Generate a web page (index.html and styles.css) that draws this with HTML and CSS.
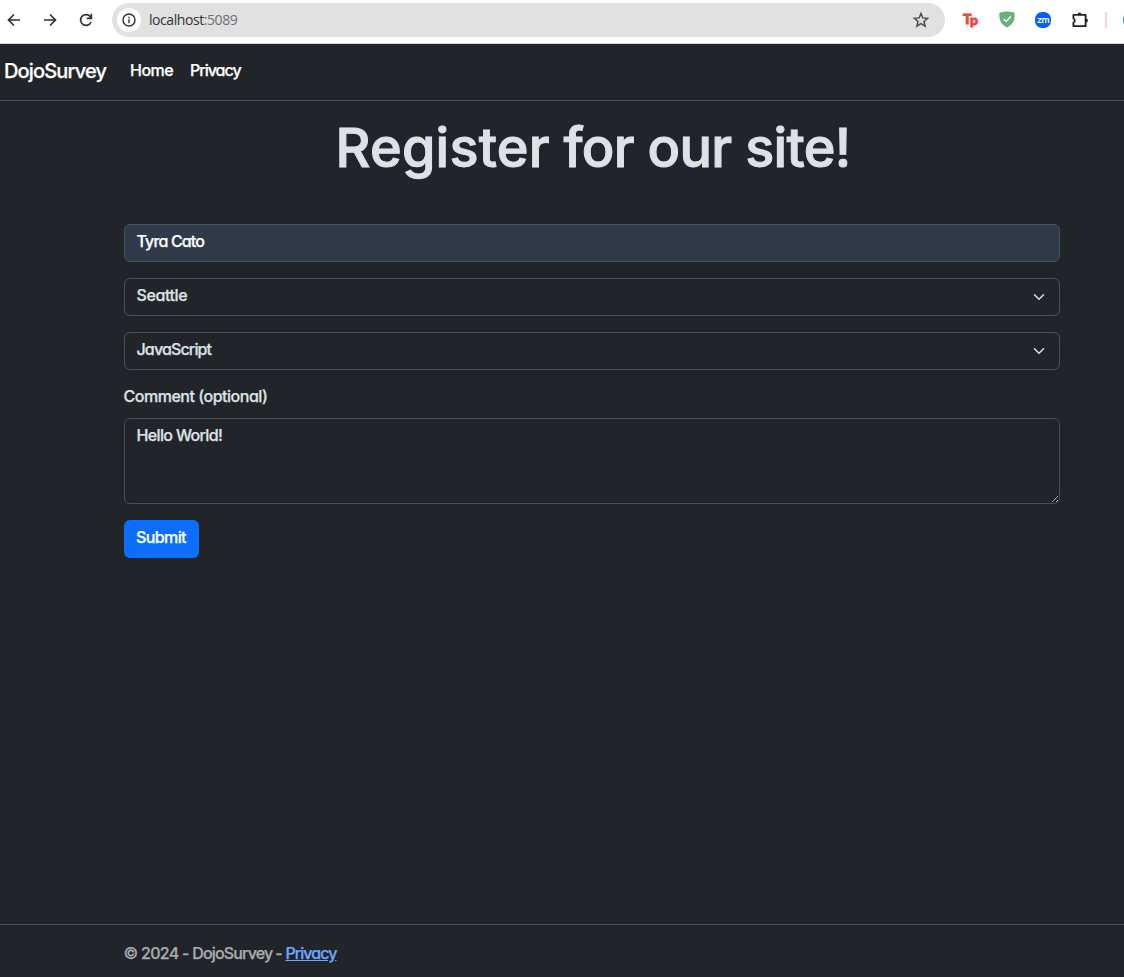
FILE: index.html
```html
<!DOCTYPE html>
<html lang="en">
<head>
<meta charset="utf-8">
<title>DojoSurvey</title>
<link rel="stylesheet" href="styles.css">
</head>
<body>
<div class="toolbar">
  <svg class="nav-icon back" width="16" height="16" viewBox="0 0 16 16"><path d="M14 8H3M8 2.5 2.5 8 8 13.5"/></svg>
  <svg class="nav-icon forward" width="16" height="16" viewBox="0 0 16 16"><path d="M2 8h11M8 2.5 13.5 8 8 13.5"/></svg>
  <svg class="nav-icon reload" width="16" height="16" viewBox="0 0 16 16"><path d="M13 10A5.400 5.400 0 1 1 12.500 5M13.300 1.800v4.600H8.800"/></svg>
  <div class="address">
    <span class="site-info"><svg width="16" height="16" viewBox="0 0 16 16"><circle cx="8" cy="8" r="6"/><path d="M8 7.2v4M8 4.7v1.5"/></svg></span>
    <span class="url">localhost<span class="port">:5089</span></span>
    <svg class="star" width="18" height="18" viewBox="0 0 18 18"><path d="m9 2.5 1.8 4.4 4.8.4-3.6 3.1 1.1 4.7L9 12.6l-4.1 2.5L6 10.400 2.400 7.300l4.800-.4z"/></svg>
  </div>
  <span class="tp"><span class="tp-t">T</span><span class="tp-p">p</span></span>
  <svg class="shield" width="16" height="17" viewBox="0 0 16 17"><path class="shield-body" d="M8 .5C5.500.500 2.500 1 .300 2 .300 8 .500 12.500 8 16.500 15.500 12.500 15.700 8 15.700 2 13.500 1 10.500.500 8 .5z"/><path class="shield-check" d="m4.700 8 2.500 2.500 4.500-5"/></svg>
  <span class="zoom-badge">zm</span>
  <svg class="puzzle" width="18" height="18" viewBox="0 0 18 18"><path d="M2.400 3.800h12.200v11.400H2.400v-3.700a2.100 2.100 0 0 0 0-4z"/><path class="knob" d="M6.700 3.500a1.900 1.900 0 0 1 3.800 0zM15 7.600a1.900 1.900 0 0 1 0 3.800z"/></svg>
  <span class="divider"></span>
  <span class="avatar"></span>
</div>
<header class="navbar">
  <a class="brand">DojoSurvey</a>
  <a class="link home">Home</a>
  <a class="link privacy">Privacy</a>
</header>
<main class="container">
  <h1><span class="lead">Register</span> for our site!</h1>
  <div class="field filled"><span class="t-name">Tyra Cato</span></div>
  <div class="field"><span class="t-city">Seattle</span><svg class="chevron" width="16" height="12" viewBox="0 0 16 16"><path d="m2 5 6 6 6-6"/></svg></div>
  <div class="field"><span class="t-lang">JavaScript</span><svg class="chevron" width="16" height="12" viewBox="0 0 16 16"><path d="m2 5 6 6 6-6"/></svg></div>
  <label for="comment" class="label">Comment (optional)</label>
  <textarea id="comment" class="comment" spellcheck="false">Hello World!</textarea>
  <button class="submit">Submit</button>
</main>
<footer class="footer"><span class="copy">© 2024 - <span class="name">DojoSurvey</span><span class="dash">-</span></span><a class="foot-link">Privacy</a></footer>
</body>
</html>
```
FILE: styles.css
```css
* { box-sizing: border-box; }
body {
  margin: 0;
  height: 977px;
  overflow: hidden;
  display: flex;
  flex-direction: column;
  background: #212529;
  color: #dee2e6;
  font: 500 16px/24px Inter, sans-serif;
  font-feature-settings: "cv11";
  -webkit-text-stroke: .25px currentColor;
}
svg { display: block; fill: none; flex: none; }
.toolbar {
  height: 44px;
  flex: none;
  display: flex;
  align-items: center;
  padding: 0 0 4px 6px;
  background: #fff;
  border-bottom: 1px solid #cfd6da;
  overflow: hidden;
  -webkit-text-stroke: 0;
}
.nav-icon { stroke: #303134; stroke-width: 1.7; margin-right: 20px; }
.reload { margin-right: 18px; }
.address {
  width: 833px;
  height: 34px;
  flex: none;
  display: flex;
  align-items: center;
  padding: 0 15px 0 5px;
  border-radius: 17px;
  background: #e1e1e1;
}
.site-info {
  width: 24px;
  height: 24px;
  display: grid;
  place-items: center;
  border-radius: 50%;
  background: #fff;
}
.site-info svg { stroke: #303134; stroke-width: 1.4; }
.url { margin-left: 8px; font: 14px/20px "Open Sans", sans-serif; letter-spacing: -.43px; color: #303134; }
.port { color: #6b6e72; }
.star { margin-left: auto; stroke: #4a4d51; stroke-width: 1.5; }
.tp { display: flex; flex: none; width: 16px; height: 18px; margin-left: 18px; color: #f9423a; font: 900 14px/18px Lato, sans-serif; -webkit-text-stroke: .8px #f9423a; }
.tp-t { margin-top: -1px; }
.tp-p { margin: 0 0 0 -1.5px; }
.shield { margin-left: 20px; }
.shield-body { fill: #67b279; }
.shield-check { stroke: #fff; stroke-width: 1.6; }
.zoom-badge {
  width: 16px;
  height: 16px;
  flex: none;
  margin-left: 20px;
  border-radius: 7px;
  background: #0b5cff;
  color: #fff;
  font: 600 9px/15px Inter, sans-serif;
  letter-spacing: -.5px;
  text-align: center;
}
.puzzle { margin-left: 20px; stroke: #202124; stroke-width: 1.8; stroke-linejoin: round; }
.knob { fill: #202124; stroke: none; }
.divider { width: 2px; height: 16px; flex: none; margin-left: 16px; background: #f5d3e4; }
.avatar { width: 20px; height: 20px; flex: none; margin-left: 16px; border-radius: 50%; background: #4776bd; }
.navbar {
  height: 57px;
  flex: none;
  display: flex;
  align-items: center;
  padding: 0 0 4px 4px;
  border-bottom: 1px solid #495057;
  color: #fff;
}
.brand { width: 126px; padding-top: 2px; font-size: 20px; letter-spacing: -.85px; }
.home { width: 60px; letter-spacing: -.5px; }
.privacy { letter-spacing: -1px; }
.container {
  width: 936px;
  margin-left: 124px;
  flex: 1;
  display: flex;
  flex-direction: column;
}
h1 {
  height: 123px;
  margin: 0;
  padding: 13px 0 0 2px;
  text-align: center;
  font-weight: 500;
  font-size: 54px;
  line-height: 67px;
  letter-spacing: -.7px;
  -webkit-text-stroke: 1px #dee2e6;
}
.lead { letter-spacing: .2px; }
.field {
  height: 38px;
  flex: none;
  display: flex;
  align-items: center;
  justify-content: space-between;
  padding: 0 12px 4px 11.5px;
  margin-bottom: 16px;
  border: 1px solid #495057;
  border-radius: 6px;
  letter-spacing: -.85px;
}
.t-city { letter-spacing: -.4px; }
.filled { background: #313a4b; color: #fff; }
.chevron { stroke: #dee2e6; stroke-width: 2; stroke-linecap: round; stroke-linejoin: round; margin-top: 4px; }
.label { height: 32px; flex: none; margin: -2px 0 0 -.5px; letter-spacing: -.48px; }
.comment {
  height: 86px;
  width: 100%;
  flex: none;
  display: block;
  margin: 2px 0 16px;
  padding: 4px 12px 4px 11.5px;
  background: #212529;
  border: 1px solid #495057;
  border-radius: 6px;
  color: #dee2e6;
  font: inherit;
  font-feature-settings: inherit;
  letter-spacing: -.65px;
  resize: vertical;
  color-scheme: dark;
}
.submit {
  width: 75px;
  height: 38px;
  padding: 0 1px 4px 0;
  border: 0;
  border-radius: 6px;
  background: #0d6efd;
  color: #fff;
  font: inherit;
  letter-spacing: -.6px;
}
.footer {
  height: 53px;
  flex: none;
  display: flex;
  align-items: center;
  padding: 4px 0 0 123.5px;
  border-top: 1px solid #495057;
  color: #a8acb0;
}
.copy { width: 162px; white-space: nowrap; letter-spacing: -.7px; }
.name { letter-spacing: -.85px; }
.dash { margin-left: 3px; }
.foot-link { color: #6ea8fe; text-decoration: underline; letter-spacing: -.95px; }
```
